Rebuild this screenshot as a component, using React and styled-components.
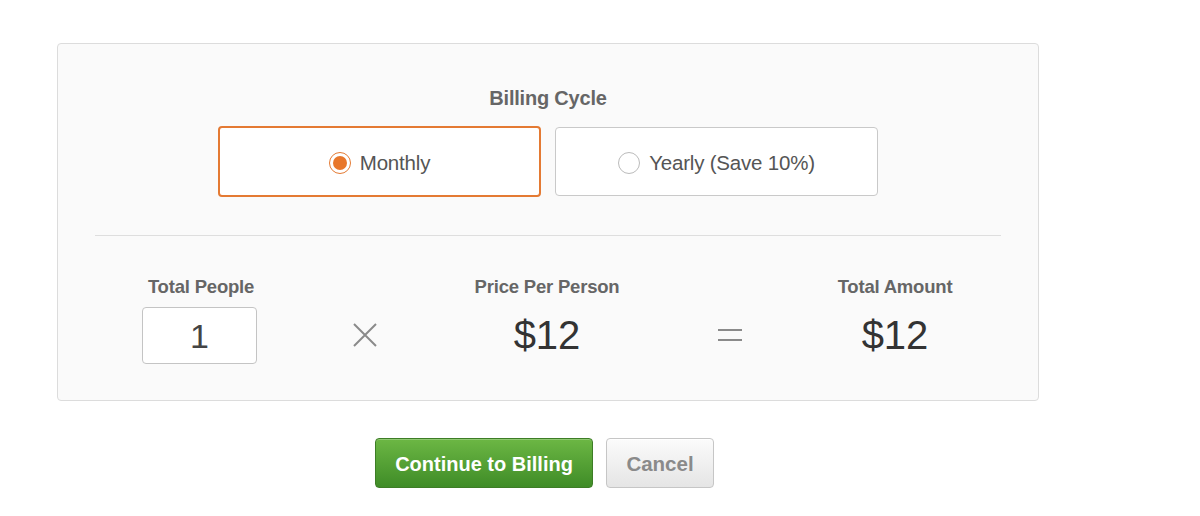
import styled, { createGlobalStyle } from "styled-components";

const GlobalStyle = createGlobalStyle`
  body {
    margin: 0;
    background: #fff;
    font-family: "Liberation Sans", Arial, sans-serif;
  }
`;

const Page = styled.div`
  width: 982px;
  padding: 43px 0 0 57px;
`;

const Panel = styled.div`
  box-sizing: border-box;
  height: 358px;
  background: #fafafa;
  border: 1px solid #dcdcdc;
  border-radius: 4px;
  padding: 0 37px;
  display: flex;
  flex-direction: column;
  align-items: center;
`;

const Heading = styled.div`
  margin-top: 43px;
  font-size: 20px;
  font-weight: bold;
  color: #666;
  letter-spacing: -0.2px;
`;

const Options = styled.div`
  display: flex;
  gap: 14px;
  margin-top: 16px;
`;

const Option = styled.label`
  box-sizing: border-box;
  width: 323px;
  height: ${p => (p.selected ? "71px" : "69px")};
  margin-top: ${p => (p.selected ? "0" : "1px")};
  padding-top: 2px;
  display: flex;
  align-items: center;
  justify-content: center;
  gap: 9px;
  background: #fff;
  border: ${p => (p.selected ? "2px solid #e47a33" : "1px solid #c9c9c9")};
  border-radius: 4px;
  font-size: 20.5px;
  color: #555;
  letter-spacing: -0.2px;
`;

const Radio = styled.span`
  box-sizing: border-box;
  width: 22px;
  height: 22px;
  border-radius: 50%;
  border: 1px solid ${p => (p.checked ? "#e47a33" : "#bbb")};
  background: #fff;
  display: flex;
  align-items: center;
  justify-content: center;
  &::after {
    content: "";
    width: 14px;
    height: 14px;
    border-radius: 50%;
    background: ${p => (p.checked ? "#e8762a" : "transparent")};
  }
`;

const Divider = styled.hr`
  align-self: stretch;
  border: none;
  border-top: 1px solid #dedede;
  margin: 38px 0 0;
`;

const Summary = styled.div`
  display: grid;
  grid-template-columns: 180px 148px 216px 150px 180px;
  margin-top: 41px;
`;

const Column = styled.div`
  display: flex;
  flex-direction: column;
  align-items: center;
`;

const Label = styled.div`
  font-size: 18.5px;
  font-weight: bold;
  color: #666;
  height: 20px;
  line-height: 20px;
  letter-spacing: -0.2px;
`;

const Value = styled.div`
  margin-top: 10px;
  height: 56px;
  line-height: 56px;
  font-size: 40px;
  color: #333;
`;

const Count = styled.input`
  box-sizing: border-box;
  margin-top: 10px;
  margin-right: 3px;
  width: 115px;
  height: 57px;
  border: 1px solid #c4c4c4;
  border-radius: 4px;
  background: #fff;
  text-align: center;
  font-family: "Liberation Sans", Arial, sans-serif;
  font-size: 34px;
  color: #444;
  padding: 2px 0 0;
`;

const Operator = styled.div`
  margin-top: 30px;
  height: 56px;
  display: flex;
  align-items: center;
  justify-content: center;
`;

const Actions = styled.div`
  display: flex;
  justify-content: center;
  gap: 13px;
  margin-top: 37px;
  padding-right: 7px;
`;

const Button = styled.button`
  box-sizing: border-box;
  height: 50px;
  padding: 2px 0 0;
  border-radius: 4px;
  font-family: "Liberation Sans", Arial, sans-serif;
  font-size: ${p => (p.primary ? "20px" : "20.5px")};
  font-weight: bold;
  color: ${p => (p.primary ? "#fff" : "#8a8a8a")};
  border: 1px solid ${p => (p.primary ? "#3d7d26" : "#c6c6c6")};
  background: ${p =>
    p.primary
      ? "linear-gradient(#6cb744, #3f8c27)"
      : "linear-gradient(#fbfbfb, #e5e5e5)"};
  box-shadow: inset 0 1px 0 ${p => (p.primary ? "rgba(255,255,255,0.25)" : "#fff")};
  width: ${p => (p.primary ? "218px" : "108px")};
`;

const Times = () => (
  <svg width="26" height="26" viewBox="0 0 26 26">
    <path d="M2 2 L24 24 M24 2 L2 24" stroke="#8a8a8a" strokeWidth="2" />
  </svg>
);

const Equals = () => (
  <svg width="26" height="14" viewBox="0 0 26 14">
    <path d="M1 2 H25 M1 12 H25" stroke="#8a8a8a" strokeWidth="2" />
  </svg>
);

export default function App() {
  return (
    <>
      <GlobalStyle />
      <Page>
        <Panel>
          <Heading>Billing Cycle</Heading>
          <Options>
            <Option selected>
              <Radio checked />
              Monthly
            </Option>
            <Option>
              <Radio />
              Yearly (Save 10%)
            </Option>
          </Options>
          <Divider />
          <Summary>
            <Column>
              <Label>Total People</Label>
              <Count defaultValue="1" />
            </Column>
            <Column>
              <Operator>
                <Times />
              </Operator>
            </Column>
            <Column>
              <Label>Price Per Person</Label>
              <Value>$12</Value>
            </Column>
            <Column>
              <Operator>
                <Equals />
              </Operator>
            </Column>
            <Column>
              <Label>Total Amount</Label>
              <Value>$12</Value>
            </Column>
          </Summary>
        </Panel>
        <Actions>
          <Button primary>Continue to Billing</Button>
          <Button>Cancel</Button>
        </Actions>
      </Page>
    </>
  );
}
